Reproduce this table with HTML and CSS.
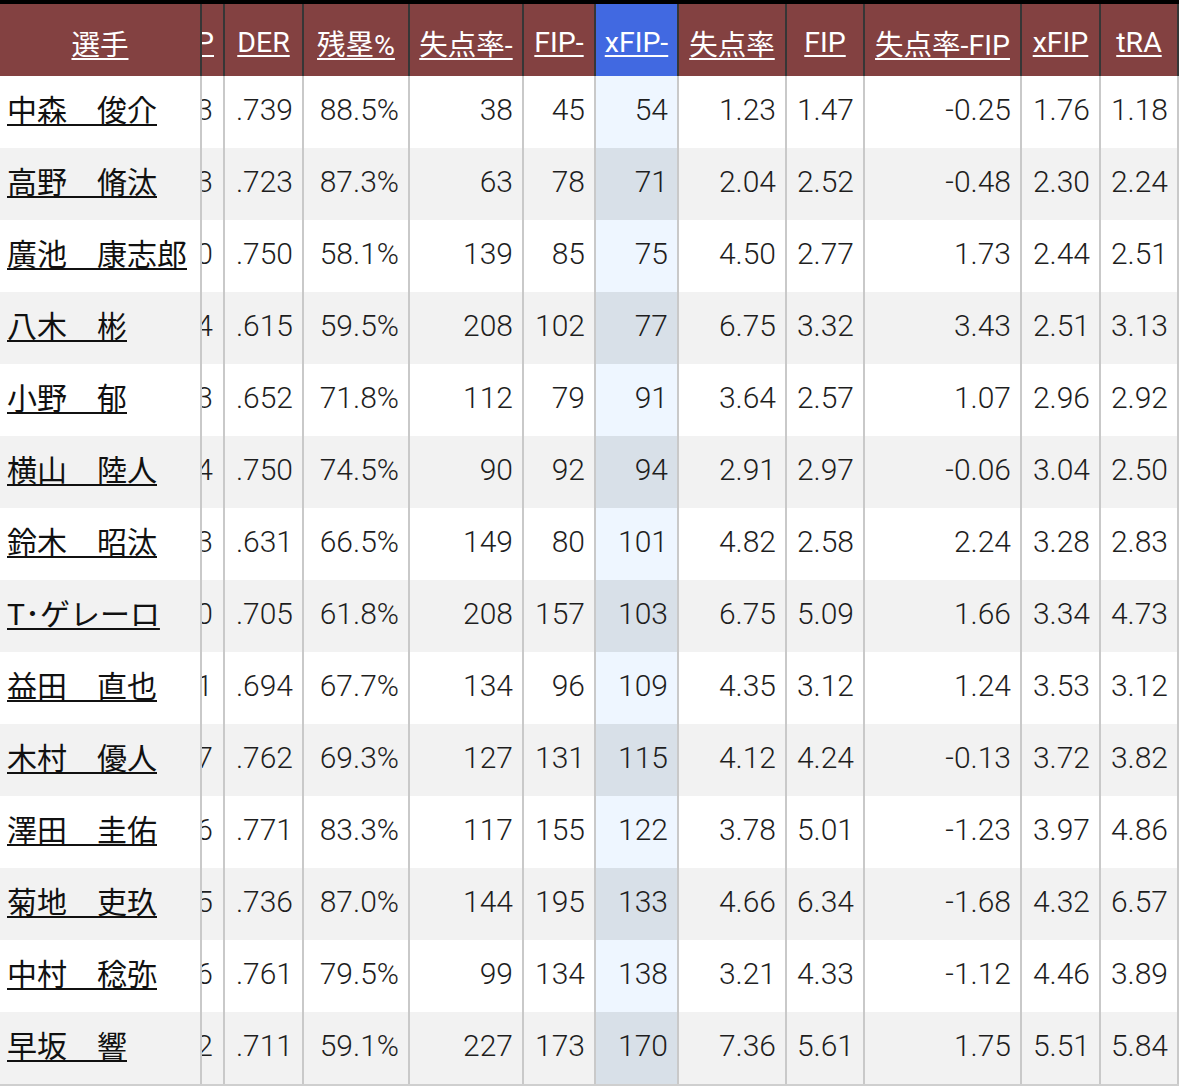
FILE: index.html
```html
<!DOCTYPE html>
<html lang="ja">
<head>
<meta charset="utf-8">
<link rel="stylesheet" href="styles.css">
<title>成績</title>
</head>
<body>
<div class="topbar"></div>
<div class="table">
  <div class="row head">
    <div class="cell name-h"><a href="#">選手</a></div>
    <div class="cell part"><a href="#">BABIP</a></div>
    <div class="cell"><a href="#">DER</a></div>
    <div class="cell"><a href="#">残塁%</a></div>
    <div class="cell"><a href="#">失点率-</a></div>
    <div class="cell"><a href="#">FIP-</a></div>
    <div class="cell sel"><a href="#">xFIP-</a></div>
    <div class="cell"><a href="#">失点率</a></div>
    <div class="cell"><a href="#">FIP</a></div>
    <div class="cell"><a href="#">失点率-FIP</a></div>
    <div class="cell"><a href="#">xFIP</a></div>
    <div class="cell"><a href="#">tRA</a></div>
  </div>
  <div class="row"><div class="cell name"><a href="#">中森　俊介</a></div><div class="cell part"><span>3</span></div><div class="cell">.739</div><div class="cell">88.5%</div><div class="cell">38</div><div class="cell">45</div><div class="cell sel">54</div><div class="cell">1.23</div><div class="cell">1.47</div><div class="cell">-0.25</div><div class="cell">1.76</div><div class="cell">1.18</div></div>
  <div class="row"><div class="cell name"><a href="#">高野　脩汰</a></div><div class="cell part"><span>3</span></div><div class="cell">.723</div><div class="cell">87.3%</div><div class="cell">63</div><div class="cell">78</div><div class="cell sel">71</div><div class="cell">2.04</div><div class="cell">2.52</div><div class="cell">-0.48</div><div class="cell">2.30</div><div class="cell">2.24</div></div>
  <div class="row"><div class="cell name"><a href="#">廣池　康志郎</a></div><div class="cell part"><span>0</span></div><div class="cell">.750</div><div class="cell">58.1%</div><div class="cell">139</div><div class="cell">85</div><div class="cell sel">75</div><div class="cell">4.50</div><div class="cell">2.77</div><div class="cell">1.73</div><div class="cell">2.44</div><div class="cell">2.51</div></div>
  <div class="row"><div class="cell name"><a href="#">八木　彬</a></div><div class="cell part"><span>4</span></div><div class="cell">.615</div><div class="cell">59.5%</div><div class="cell">208</div><div class="cell">102</div><div class="cell sel">77</div><div class="cell">6.75</div><div class="cell">3.32</div><div class="cell">3.43</div><div class="cell">2.51</div><div class="cell">3.13</div></div>
  <div class="row"><div class="cell name"><a href="#">小野　郁</a></div><div class="cell part"><span>3</span></div><div class="cell">.652</div><div class="cell">71.8%</div><div class="cell">112</div><div class="cell">79</div><div class="cell sel">91</div><div class="cell">3.64</div><div class="cell">2.57</div><div class="cell">1.07</div><div class="cell">2.96</div><div class="cell">2.92</div></div>
  <div class="row"><div class="cell name"><a href="#">横山　陸人</a></div><div class="cell part"><span>4</span></div><div class="cell">.750</div><div class="cell">74.5%</div><div class="cell">90</div><div class="cell">92</div><div class="cell sel">94</div><div class="cell">2.91</div><div class="cell">2.97</div><div class="cell">-0.06</div><div class="cell">3.04</div><div class="cell">2.50</div></div>
  <div class="row"><div class="cell name"><a href="#">鈴木　昭汰</a></div><div class="cell part"><span>3</span></div><div class="cell">.631</div><div class="cell">66.5%</div><div class="cell">149</div><div class="cell">80</div><div class="cell sel">101</div><div class="cell">4.82</div><div class="cell">2.58</div><div class="cell">2.24</div><div class="cell">3.28</div><div class="cell">2.83</div></div>
  <div class="row"><div class="cell name"><a href="#">T･ゲレーロ</a></div><div class="cell part"><span>0</span></div><div class="cell">.705</div><div class="cell">61.8%</div><div class="cell">208</div><div class="cell">157</div><div class="cell sel">103</div><div class="cell">6.75</div><div class="cell">5.09</div><div class="cell">1.66</div><div class="cell">3.34</div><div class="cell">4.73</div></div>
  <div class="row"><div class="cell name"><a href="#">益田　直也</a></div><div class="cell part"><span>1</span></div><div class="cell">.694</div><div class="cell">67.7%</div><div class="cell">134</div><div class="cell">96</div><div class="cell sel">109</div><div class="cell">4.35</div><div class="cell">3.12</div><div class="cell">1.24</div><div class="cell">3.53</div><div class="cell">3.12</div></div>
  <div class="row"><div class="cell name"><a href="#">木村　優人</a></div><div class="cell part"><span>7</span></div><div class="cell">.762</div><div class="cell">69.3%</div><div class="cell">127</div><div class="cell">131</div><div class="cell sel">115</div><div class="cell">4.12</div><div class="cell">4.24</div><div class="cell">-0.13</div><div class="cell">3.72</div><div class="cell">3.82</div></div>
  <div class="row"><div class="cell name"><a href="#">澤田　圭佑</a></div><div class="cell part"><span>6</span></div><div class="cell">.771</div><div class="cell">83.3%</div><div class="cell">117</div><div class="cell">155</div><div class="cell sel">122</div><div class="cell">3.78</div><div class="cell">5.01</div><div class="cell">-1.23</div><div class="cell">3.97</div><div class="cell">4.86</div></div>
  <div class="row"><div class="cell name"><a href="#">菊地　吏玖</a></div><div class="cell part"><span>5</span></div><div class="cell">.736</div><div class="cell">87.0%</div><div class="cell">144</div><div class="cell">195</div><div class="cell sel">133</div><div class="cell">4.66</div><div class="cell">6.34</div><div class="cell">-1.68</div><div class="cell">4.32</div><div class="cell">6.57</div></div>
  <div class="row"><div class="cell name"><a href="#">中村　稔弥</a></div><div class="cell part"><span>6</span></div><div class="cell">.761</div><div class="cell">79.5%</div><div class="cell">99</div><div class="cell">134</div><div class="cell sel">138</div><div class="cell">3.21</div><div class="cell">4.33</div><div class="cell">-1.12</div><div class="cell">4.46</div><div class="cell">3.89</div></div>
  <div class="row"><div class="cell name"><a href="#">早坂　響</a></div><div class="cell part"><span>2</span></div><div class="cell">.711</div><div class="cell">59.1%</div><div class="cell">227</div><div class="cell">173</div><div class="cell sel">170</div><div class="cell">7.36</div><div class="cell">5.61</div><div class="cell">1.75</div><div class="cell">5.51</div><div class="cell">5.84</div></div>
</div>
</body>
</html>
```
FILE: styles.css
```css
html, body {
  margin: 0;
  padding: 0;
  background: #ffffff;
}
body {
  font-family: Roboto, "Noto Sans CJK JP", sans-serif;
  font-weight: 300;
  color: #1e1e1e;
  width: 1179px;
  overflow: hidden;
}
.topbar {
  height: 4px;
  background: #000000;
}
.table {
  display: flex;
  flex-direction: column;
  border-bottom: 2px solid #cfcfcf;
}
.row {
  display: grid;
  grid-template-columns: 202px 23px 79px 106px 114px 72px 83px 108px 78px 157px 79px 78px;
  height: 72px;
}
.row:nth-child(odd) {
  background: #f2f2f2;
}
.cell {
  display: flex;
  align-items: center;
  justify-content: flex-end;
  padding: 0 9px 6px 0;
  border-right: 2px solid #c9c9c9;
  font-size: 30px;
  white-space: nowrap;
  overflow: hidden;
  box-sizing: border-box;
}
.cell.part {
  padding-right: 10px;
}
.cell.name {
  justify-content: flex-start;
  padding-left: 7px;
  padding-right: 0;
  padding-bottom: 9px;
  font-weight: 400;
}
.cell.name a {
  color: #111111;
  text-decoration: underline;
  text-decoration-thickness: 2px;
  text-underline-offset: 3px;
}
.cell.sel {
  background: #eef6ff;
}
.row:nth-child(odd) .cell.sel {
  background: #d8e0e8;
}
.row.head {
  background: #834141;
}
.row.head .cell {
  justify-content: center;
  padding: 4px 0 0 0;
  font-size: 28.5px;
  font-weight: 400;
  border-right-color: #363636;
}
.row.head .cell.part {
  justify-content: flex-end;
  padding-right: 9px;
}
.row.head .cell.sel {
  background: #4169e1;
}
.row.head a {
  color: #ffffff;
  text-decoration: underline;
  text-decoration-thickness: 1.5px;
  text-underline-offset: 3px;
}
```
